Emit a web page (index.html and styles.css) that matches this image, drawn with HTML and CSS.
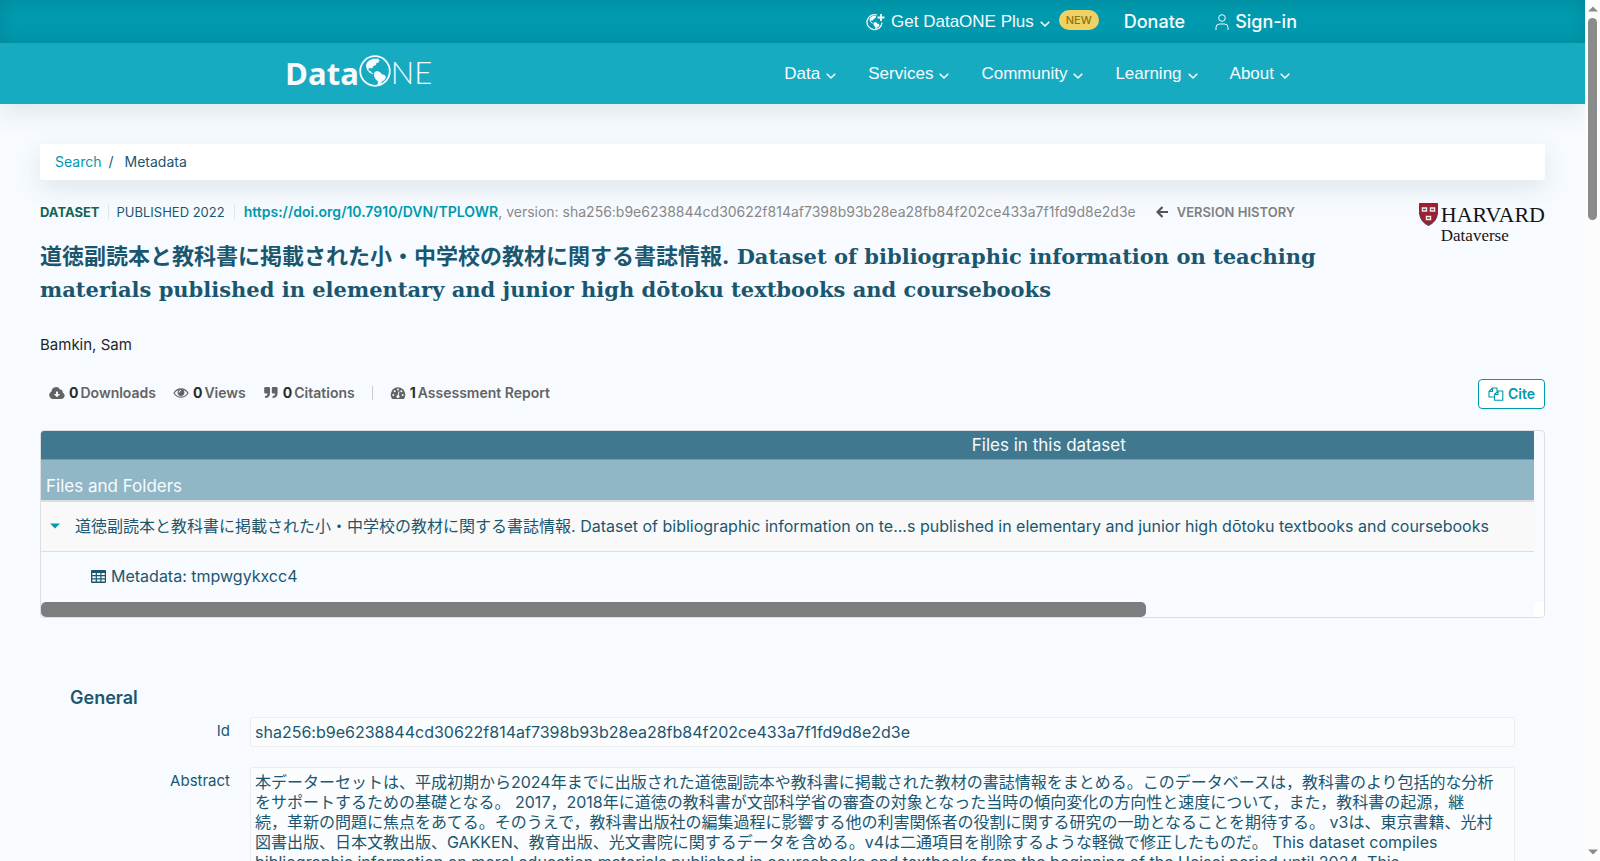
FILE: index.html
```html
<!DOCTYPE html>
<html lang="en">
<head>
<meta charset="utf-8">
<title>Dataset of bibliographic information on teaching materials | DataONE</title>
<link rel="stylesheet" href="styles.css">
</head>
<body>
<svg class="sprite" aria-hidden="true">
  <symbol id="chevron" viewBox="0 0 10 10"><path d="M1.2 3.2 5 7l3.800-3.800" fill="none" stroke="currentColor" stroke-width="1.600" stroke-linecap="round" stroke-linejoin="round"/></symbol>
  <symbol id="land" viewBox="0 0 32 32"><path fill="currentColor" d="M7 11c0-3 2-5 4-6l4-1.500 2 .5 2-.5 1.500 2-1 2-2 .5-.5 2-2.500 1-1.500 2.500-1.500-.5-2 .5 0 2 2 .5 1.500 2 1.500.5-.5.800-3.500-1.500-2.500-3zM15.500 17l3-1 3 1.500 1 1.500 3 1 1.500 2-1.500 3-2.500 1.500-1.500 2.500-2 1.500-1 0 .5-4-2.500-2.500-1.500-3z"/></symbol>
</svg>
<div class="window">
<div class="page">
  <header class="header">
    <div class="topbar">
      <nav class="wrap topbar-nav" aria-label="Account">
        <button class="menu plus" type="button">
          <svg class="plus-icon" viewBox="0 0 19 18"><path d="M11 2A7.500 7.500 0 1 0 16 9.500" fill="none" stroke="currentColor" stroke-width="1.300"/><use href="#land" x="0" y="1" width="16" height="16"/><path d="M15 1v7M11.500 4.500h7" stroke="currentColor" stroke-width="1.800"/></svg>
          Get DataONE Plus
          <svg class="chevron"><use href="#chevron"/></svg>
        </button>
        <span class="badge">NEW</span>
        <a class="toplink donate" href="#donate">Donate</a>
        <a class="toplink" href="#signin"><svg class="person" viewBox="0 0 14 16"><circle cx="7" cy="4" r="3.300"/><path d="M1 16v-2.500A3.500 3.500 0 0 1 4.500 10h5a3.500 3.500 0 0 1 3.500 3.500V16"/></svg>Sign-in</a>
      </nav>
    </div>
    <div class="mainbar">
      <div class="wrap mainbar-row">
        <a class="logo" href="#home" aria-label="DataONE"><span class="logo-data">Data</span><svg class="logo-globe" viewBox="0 0 32 32"><circle cx="16" cy="16" r="14.800" fill="none" stroke="currentColor" stroke-width="1.800"/><use href="#land" width="32" height="32"/></svg><span class="logo-ne">NE</span></a>
        <nav class="mainnav" aria-label="Main">
          <button class="menu" type="button">Data<svg class="chevron"><use href="#chevron"/></svg></button>
          <button class="menu" type="button">Services<svg class="chevron"><use href="#chevron"/></svg></button>
          <button class="menu" type="button">Community<svg class="chevron"><use href="#chevron"/></svg></button>
          <button class="menu" type="button">Learning<svg class="chevron"><use href="#chevron"/></svg></button>
          <button class="menu" type="button">About<svg class="chevron"><use href="#chevron"/></svg></button>
        </nav>
      </div>
    </div>
  </header>

  <main class="content">
    <nav class="breadcrumb" aria-label="Breadcrumb"><a href="#search">Search</a><span>/</span><span class="current">Metadata</span></nav>

    <section class="summary">
      <div class="summary-text">
        <div class="meta">
          <strong class="kind">DATASET</strong>
          <span class="published">PUBLISHED 2022</span>
          <span class="identifier"><a href="#doi">https://doi.org/10.7910/DVN/TPLOWR</a>, version: sha256:b9e6238844cd30622f814af7398b93b28ea28fb84f202ce433a7f1fd9d8e2d3e</span>
          <a class="history" href="#history"><svg viewBox="0 0 12 12"><path d="M6.500 1 1.500 6l5 5M2 6h10" fill="none" stroke="currentColor" stroke-width="2.200"/></svg>VERSION HISTORY</a>
        </div>
        <h1 class="title"><span class="title-ja" lang="ja">道徳副読本と教科書に掲載された小・中学校の教材に関する書誌情報</span>. Dataset of bibliographic information on teaching materials published in elementary and junior high dōtoku textbooks and coursebooks</h1>
      </div>
      <a class="repository" href="#harvard">
        <svg class="shield" viewBox="0 0 19 23"><path d="M.5.500h18v8c0 7-3.500 11.500-9 14-5.500-2.500-9-7-9-14z" fill="#a51c30" stroke="#44434a"/><g fill="#f4f1ee" stroke="#55484b" stroke-width=".6"><path d="M2.500 4h6v5h-6zM10.500 4h6v5h-6zM6.500 12.500h6v5h-6z"/></g><path d="M4 6.500h3M12 6.500h3M8 15h3" stroke="#555" stroke-width="1.500"/></svg>
        <span class="repository-name"><span class="harvard">HARVARD</span><span class="dataverse">Dataverse</span></span>
      </a>
    </section>

    <p class="author">Bamkin, Sam</p>

    <div class="controls">
      <div class="metrics">
        <button type="button"><svg viewBox="0 0 16 14"><path fill="currentColor" fill-rule="evenodd" d="M4 13a4 4 0 0 1-1.500-7.600A4.500 4.500 0 0 1 11 3.500a2.500 2.500 0 0 1 2.600 3A3.400 3.400 0 0 1 12.500 13zM7 5.500V8H4.800L8 11.300 11.200 8H9V5.500z"/></svg><b>0</b>Downloads</button>
        <button type="button"><svg viewBox="0 0 16 14"><path d="M1 7c3.500-5.600 10.500-5.600 14 0-3.500 5.600-10.500 5.600-14 0z" fill="none" stroke="currentColor" stroke-width="1.200"/><circle cx="8" cy="6.500" r="3.400" fill="currentColor"/><path d="M6 6.500a2 2 0 0 1 2-2" fill="none" stroke="#f7fbff"/></svg><b>0</b>Views</button>
        <button type="button"><svg viewBox="0 0 16 14"><path fill="currentColor" d="M2.500 1h3.200Q7 1 7 2.300V7q0 5-5 5v-2q2.500 0 2.500-2.500H2.500Q1.200 7.500 1.200 6.200V2.300Q1.200 1 2.500 1zM10.100 1h3.200q1.300 0 1.300 1.300V7q0 5-5 5v-2q2.500 0 2.500-2.500h-2Q8.800 7.500 8.800 6.200V2.300Q8.800 1 10.100 1z"/></svg><b>0</b>Citations</button>
        <span class="divider"></span>
        <button type="button"><svg viewBox="0 0 16 14"><path fill="currentColor" d="M2.200 13A7.300 7.300 0 1 1 13.800 13z"/><g fill="#f7fbff"><circle cx="3.300" cy="9" r="1"/><circle cx="4.700" cy="5.200" r="1"/><circle cx="8" cy="3.500" r="1"/><circle cx="11.300" cy="5.200" r="1"/><circle cx="12.700" cy="9" r="1"/><circle cx="8" cy="10.500" r="1.500"/></g><path d="M8 10.500l1-5" stroke="#f7fbff"/></svg><b>1</b>Assessment Report</button>
      </div>
      <button class="cite" type="button"><svg viewBox="0 0 16 14"><path d="M6 10H1V4.500L4.500 1H9v3M4.500 1v3.500H1M6.500 13.300V7.500L10 4h4.800v9.300zM10 4v3.500H6.500" fill="none" stroke="currentColor" stroke-width="1.100" stroke-linejoin="round"/></svg>Cite</button>
    </div>

    <section class="files">
      <div class="files-view">
        <table class="files-table">
          <thead>
            <tr><th class="files-title">Files in this dataset</th></tr>
            <tr><th class="files-column">Files and Folders</th></tr>
          </thead>
          <tbody>
            <tr><td class="folder"><span class="cell"><svg class="caret" viewBox="0 0 10 6"><path fill="currentColor" d="M0 .500h10L5 5.500z"/></svg><span><span lang="ja">道徳副読本と教科書に掲載された小・中学校の教材に関する書誌情報</span>. Dataset of bibliographic information on te...s published in elementary and junior high dōtoku textbooks and coursebooks</span></span></td></tr>
            <tr><td class="file"><span class="cell"><svg class="grid-icon" viewBox="0 0 15 13"><path fill="currentColor" fill-rule="evenodd" d="M1 0h13a1 1 0 0 1 1 1v11a1 1 0 0 1-1 1H1a1 1 0 0 1-1-1V1a1 1 0 0 1 1-1zM1.300 3h3.400v2H1.300zM5.900 3h3.400v2H5.900zM10.500 3h3.300v2h-3.300zM1.300 6.200h3.400v2H1.300zM5.900 6.200h3.400v2H5.900zM10.500 6.200h3.300v2h-3.300zM1.300 9.500h3.400v2H1.300zM5.900 9.500h3.400v2H5.900zM10.500 9.500h3.300v2h-3.300z"/></svg>Metadata: tmpwgykxcc4</span></td></tr>
          </tbody>
        </table>
      </div>
      <div class="files-scroll"><div class="files-thumb"></div></div>
    </section>

    <section class="details">
      <h2>General</h2>
      <dl>
        <dt>Id</dt>
        <dd>sha256:b9e6238844cd30622f814af7398b93b28ea28fb84f202ce433a7f1fd9d8e2d3e</dd>
        <dt>Abstract</dt>
        <dd lang="ja">本データーセットは、平成初期から2024年までに出版された道徳副読本や教科書に掲載された教材の書誌情報をまとめる。このデータベースは，教科書のより包括的な分析<br>をサポートするための基礎となる。 2017，2018年に道徳の教科書が文部科学省の審査の対象となった当時の傾向変化の方向性と速度について，また，教科書の起源，継<br>続，革新の問題に焦点をあてる。そのうえで，教科書出版社の編集過程に影響する他の利害関係者の役割に関する研究の一助となることを期待する。 v3は、東京書籍、光村<br>図書出版、日本文教出版、GAKKEN、教育出版、光文書院に関するデータを含める。v4は二通項目を削除するような軽微で修正したものだ。 This dataset compiles<br>bibliographic information on moral education materials published in coursebooks and textbooks from the beginning of the Heisei period until 2024. This</dd>
      </dl>
    </section>
  </main>
</div>
<div class="scrollbar" aria-hidden="true">
  <svg viewBox="0 0 10 6"><path fill="currentColor" d="M0 5.500h10L5 .500z"/></svg>
  <div class="track"><div class="thumb"></div></div>
  <svg viewBox="0 0 10 6"><path fill="currentColor" d="M0 .500h10L5 5.500z"/></svg>
</div>
</div>
</body>
</html>
```
FILE: styles.css
```css
* { box-sizing: border-box; }

body {
  margin: 0;
  background: #f7fbff;
  color: #1a576f;
  font-family: Inter, "Noto Sans CJK JP", sans-serif;
  font-size: 16px;
  line-height: 20px;
}

a { text-decoration: none; color: #0099ad; }
button { font: inherit; color: inherit; background: none; border: 0; padding: 0; }
.sprite { position: absolute; width: 0; height: 0; }

.window { display: flex; height: 100vh; overflow: hidden; }
.page { flex: 1; min-width: 0; overflow: hidden; }

/* Header */
.header { box-shadow: 0 8px 24px rgba(60, 70, 80, 0.12); color: #f7fbff; }
.wrap { max-width: 1015px; margin: 0 auto; }
.topbar { height: 43px; background: #009bb0; box-shadow: inset 0 0 20px rgba(0, 80, 90, 0.25); }
.topbar-nav { display: flex; align-items: center; justify-content: flex-end; height: 43px; padding-right: 3px; }
.menu {
  display: flex;
  align-items: center;
  gap: 6px;
  font-family: "Liberation Sans", Arial, sans-serif;
  font-size: 17px;
  line-height: 24px;
  white-space: nowrap;
}
.chevron { width: 10px; height: 10px; margin-top: 4px; }
.plus-icon { width: 19px; height: 18px; }
.badge {
  margin: 0 25px 4px 9px;
  padding: 0 7px;
  border-radius: 10px;
  background: #f0d264;
  color: #8b7414;
  font-size: 11px;
  font-weight: 500;
  line-height: 20px;
}
.toplink { display: flex; align-items: center; gap: 6px; color: #f7fbff; font-size: 18px; font-weight: 500; line-height: 24px; }
.donate { margin-right: 30px; }
.person { width: 14px; height: 16px; fill: none; stroke: currentColor; stroke-width: 1; }

.mainbar { background: #17abc1; }
.mainbar-row { display: flex; align-items: center; justify-content: space-between; height: 61px; }
.mainnav { display: flex; gap: 32px; padding-right: 10px; }
.logo { display: flex; align-items: flex-end; height: 33px; margin-bottom: 6px; color: #f7fbff; }
.logo-data { font-family: "Open Sans", sans-serif; font-size: 31px; font-weight: 700; line-height: 28px; }
.logo-globe { width: 32px; height: 32px; }
.logo-ne { font-family: Lato, sans-serif; font-size: 31px; font-weight: 300; line-height: 29px; }

/* Dataset summary */
.content { padding: 40px; }
.breadcrumb {
  display: flex;
  gap: 7px;
  padding: 8px 15px;
  border-radius: 3px;
  background: #fff;
  box-shadow: 0 8px 24px rgba(60, 70, 80, 0.12);
  font-size: 14px;
}
.current { margin-left: 4px; }

.summary { display: flex; justify-content: space-between; align-items: flex-start; margin-top: 22px; }
.summary-text { flex: 1; max-width: 1310px; }
.meta { display: flex; align-items: center; font-size: 13px; white-space: nowrap; }
.kind { padding-right: 8px; color: #146457; font-weight: 700; }
.published { padding: 0 9px 0 8px; border: solid #dfe5ea; border-width: 0 1px; line-height: 14px; }
.identifier { padding-left: 9px; color: #888; font-size: 14px; }
.identifier a { font-weight: 600; }
.history { display: flex; align-items: center; gap: 9px; margin-left: 20px; color: #808080; font-weight: 600; }
.history svg { width: 12px; height: 12px; color: #555; }
.title {
  margin: 18px 0 0;
  font-family: "DejaVu Serif", "Noto Sans CJK JP", serif;
  font-size: 21px;
  font-weight: 700;
  line-height: 33px;
}
.title-ja { font-family: "Noto Sans CJK JP", sans-serif; font-size: 22px; line-height: 22px; }

.repository { display: flex; gap: 3px; margin-top: 1px; color: #151515; font-family: "Liberation Serif", serif; }
.shield { width: 19px; height: 23px; }
.repository-name { display: flex; flex-direction: column; }
.harvard { font-size: 22px; line-height: 24px; }
.dataverse { font-size: 17px; line-height: 18px; }

.author { margin: 29px 0 0; color: #252525; font-size: 15px; }

.controls { display: flex; justify-content: space-between; align-items: center; margin-top: 24px; }
.metrics { display: flex; align-items: center; gap: 17px; padding: 0 0 2px 9px; color: #636363; }
.metrics button { display: flex; align-items: center; font-size: 14px; font-weight: 600; }
.metrics svg { width: 16px; height: 14px; margin-right: 4px; }
.metrics b { margin-right: 2px; color: #2b2b2b; font-weight: 700; }
.divider { width: 1px; height: 14px; background: #c8ccd0; }
.cite {
  display: flex;
  align-items: center;
  gap: 4px;
  padding: 4px 9px;
  border: 1px solid #0099ad;
  border-radius: 4px;
  background: #fff;
  color: #0099ad;
  font-size: 14px;
  font-weight: 600;
}
.cite svg { width: 16px; height: 14px; }

/* File table */
.files { margin-top: 21px; border: 1px solid #dedede; border-radius: 4px; overflow: hidden; }
.files-view { margin-right: 10px; overflow: hidden; }
.files-table { width: 135%; border-collapse: separate; border-spacing: 0; table-layout: fixed; white-space: nowrap; }
.files-table th { padding: 4px 5px; color: #f7fbff; font-size: 17px; font-weight: 400; }
.files-title { height: 29px; border-bottom: 1px solid #6f9bae; background: #40788f; }
.files-table .files-column { height: 42px; padding-top: 15px; border-bottom: 2px solid #dedede; background: #91b6c6; text-align: left; }
.files-table td { height: 50px; padding: 0 0 2px; }
.folder { border-bottom: 1px solid #dedede; background: #f9f9f9; }
.cell { display: flex; align-items: center; }
.folder .cell { gap: 15px; padding-left: 9px; }
.file .cell { gap: 5px; padding-left: 50px; }
.caret { width: 10px; height: 6px; color: #0099ad; }
.grid-icon { width: 15px; height: 13px; }
.files-scroll { height: 15px; border-right: 10px solid #fff; }
.files-thumb { width: 74%; height: 15px; border-radius: 5px; background: #7c7d7f; }

/* Metadata details */
.details { padding: 69px 30px 0; }
.details h2 { margin: 0; font-size: 18px; font-weight: 600; line-height: 22px; }
.details dl { display: grid; grid-template-columns: 160px 1fr; gap: 20px; margin: 8px 0 0; }
.details dt { padding-top: 4px; font-size: 15px; text-align: right; }
.details dd { margin: 0; padding: 4px; border: 1px solid #ececec; border-radius: 2px; background: #fbfcfe; }

/* Page scrollbar */
.scrollbar { display: flex; flex-direction: column; align-items: center; gap: 6px; width: 15px; padding: 6px 0; background: #fcfcfc; color: #8b8b8b; }
.scrollbar svg { width: 10px; height: 6px; }
.track { flex: 1; }
.thumb { width: 9px; height: 202px; border-radius: 5px; background: #8b8b8b; }
```
